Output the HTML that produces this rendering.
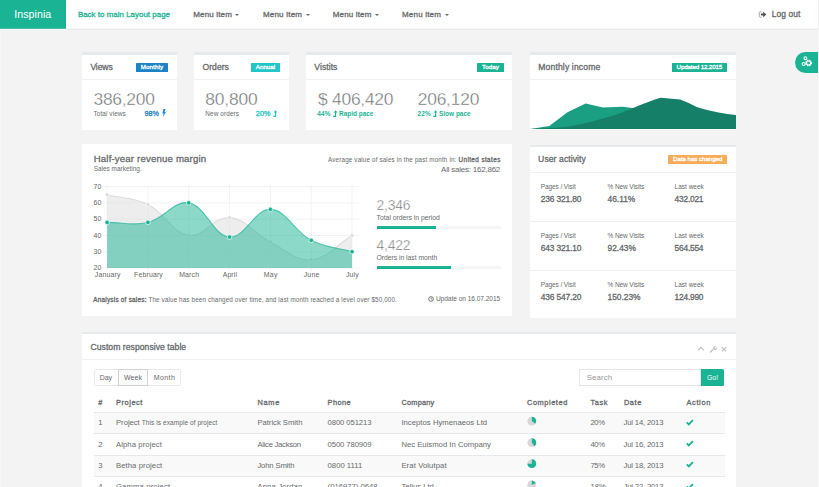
<!DOCTYPE html><html><head><meta charset="utf-8"><style>html,body{margin:0;padding:0}body{width:819px;height:487px;overflow:hidden;background:#f3f3f4;position:relative;font-family:"Liberation Sans",sans-serif}body>div,body>svg{position:absolute}.t{white-space:nowrap}</style></head><body>
<div style="left:0px;top:0px;width:819.00px;height:28.00px;background:#fff;"></div>
<div style="left:0px;top:28px;width:819.00px;height:1.00px;background:#f8f8f9;"></div>
<div style="left:0px;top:29px;width:819.00px;height:1.00px;background:#ebebed;"></div>
<div style="left:0px;top:0px;width:66.00px;height:28.00px;background:#1ab394;"></div>
<div style="left:0px;top:28px;width:66.00px;height:1.00px;background:#4cc0a8;"></div>
<div style="left:0px;top:29px;width:66.00px;height:1.00px;background:#f9f8f9;"></div>
<div style="left:0px;top:30px;width:1.00px;height:457.00px;background:#f7f7f8;"></div>
<div class="t" style="left:14.20px;top:9.00px;font-size:10.6px;line-height:10.6px;color:#fff;font-weight:normal;letter-spacing:0.080px;">Inspinia</div>
<div class="t" style="left:77.90px;top:11.00px;font-size:7.9px;line-height:7.9px;color:#1ab394;font-weight:normal;letter-spacing:0.037px;-webkit-text-stroke:0.3px #1ab394;">Back to main Layout page</div>
<div class="t" style="left:193.30px;top:11.00px;font-size:8.0px;line-height:8.0px;color:#676a6c;font-weight:normal;letter-spacing:0.144px;-webkit-text-stroke:0.3px #676a6c;">Menu item</div>
<div style="left:235.4px;top:14.4px;width:0;height:0;border-left:2.1px solid transparent;border-right:2.1px solid transparent;border-top:2.1px solid #676a6c"></div>
<div class="t" style="left:262.90px;top:11.00px;font-size:8.0px;line-height:8.0px;color:#676a6c;font-weight:normal;letter-spacing:0.219px;-webkit-text-stroke:0.3px #676a6c;">Menu item</div>
<div style="left:305.6px;top:14.4px;width:0;height:0;border-left:2.1px solid transparent;border-right:2.1px solid transparent;border-top:2.1px solid #676a6c"></div>
<div class="t" style="left:332.80px;top:11.00px;font-size:8.0px;line-height:8.0px;color:#676a6c;font-weight:normal;letter-spacing:0.144px;-webkit-text-stroke:0.3px #676a6c;">Menu item</div>
<div style="left:374.9px;top:14.4px;width:0;height:0;border-left:2.1px solid transparent;border-right:2.1px solid transparent;border-top:2.1px solid #676a6c"></div>
<div class="t" style="left:402.00px;top:11.00px;font-size:8.0px;line-height:8.0px;color:#676a6c;font-weight:normal;letter-spacing:0.194px;-webkit-text-stroke:0.3px #676a6c;">Menu item</div>
<div style="left:444.5px;top:14.4px;width:0;height:0;border-left:2.1px solid transparent;border-right:2.1px solid transparent;border-top:2.1px solid #676a6c"></div>
<div class="t" style="left:771.80px;top:10.00px;font-size:8.4px;line-height:8.4px;color:#676a6c;font-weight:normal;letter-spacing:0.079px;-webkit-text-stroke:0.3px #676a6c;">Log out</div>
<svg style="left:757.5px;top:10px" width="10" height="9" viewBox="0 0 10 9"><path d="M3.6 1.8H2.2Q1.3 1.8 1.3 2.7V6.3Q1.3 7.2 2.2 7.2H3.6" fill="none" stroke="#aaa" stroke-width="1"/><path d="M2.9 3.6H5.2V1.7L8.4 4.5L5.2 7.3V5.4H2.9Z" fill="#555"/></svg>
<div style="left:818px;top:0;width:1px;height:487px;background:#f8f8f9"></div>
<div style="left:818px;top:0;width:1px;height:30px;background:#f0f0f1"></div>
<div style="left:794.8px;top:51.5px;width:23.2px;height:21.3px;background:#1ab394;border-radius:10.6px 0 0 10.6px"></div>
<svg style="left:800px;top:55px" width="14" height="13" viewBox="0 0 14 13"><circle cx="8.6" cy="8" r="2.6" fill="none" stroke="#fff" stroke-width="1.6" stroke-dasharray="1.2 0.9"/><circle cx="8.6" cy="8" r="2.0" fill="none" stroke="#fff" stroke-width="1.1"/><circle cx="3.6" cy="9" r="1.5" fill="none" stroke="#fff" stroke-width="1.1"/><circle cx="5.4" cy="3.2" r="1.4" fill="none" stroke="#fff" stroke-width="1.1"/></svg>
<div style="left:82px;top:52.3px;width:95.00px;height:2.30px;background:#e7eaec;"></div>
<div style="left:82px;top:54.599999999999994px;width:95.00px;height:75.40px;background:#fff;"></div>
<div style="left:82px;top:79.3px;width:95.00px;height:1.00px;background:#eef0f1;"></div>
<div style="left:194px;top:52.3px;width:95.00px;height:2.30px;background:#e7eaec;"></div>
<div style="left:194px;top:54.599999999999994px;width:95.00px;height:75.40px;background:#fff;"></div>
<div style="left:194px;top:79.3px;width:95.00px;height:1.00px;background:#eef0f1;"></div>
<div style="left:306px;top:52.3px;width:206.00px;height:2.30px;background:#e7eaec;"></div>
<div style="left:306px;top:54.599999999999994px;width:206.00px;height:75.40px;background:#fff;"></div>
<div style="left:306px;top:79.3px;width:206.00px;height:1.00px;background:#eef0f1;"></div>
<div style="left:529.5px;top:52.3px;width:206.50px;height:2.30px;background:#e7eaec;"></div>
<div style="left:529.5px;top:54.599999999999994px;width:206.50px;height:75.40px;background:#fff;"></div>
<div style="left:529.5px;top:79.3px;width:206.50px;height:1.00px;background:#eef0f1;"></div>
<div class="t" style="left:90.40px;top:63.00px;font-size:8.6px;line-height:8.6px;color:#676a6c;font-weight:normal;letter-spacing:-0.096px;-webkit-text-stroke:0.3px #676a6c;">Views</div>
<div style="left:135.6px;top:63px;width:32.30px;height:9.00px;background:#1c84c6;border-radius:0.6px"></div>
<div class="t" style="left:140.70px;top:64.00px;font-size:6.2px;line-height:6.2px;color:#fff;font-weight:normal;letter-spacing:0.132px;-webkit-text-stroke:0.3px #fff;">Monthly</div>
<div class="t" style="left:93.50px;top:91.00px;font-size:17.4px;line-height:17.4px;color:#676a6c;font-weight:normal;letter-spacing:-0.250px;-webkit-text-stroke:0.4px #fff;">386,200</div>
<div class="t" style="left:93.50px;top:111.00px;font-size:6.4px;line-height:6.4px;color:#676a6c;font-weight:normal;letter-spacing:0.100px;">Total views</div>
<div class="t" style="left:144.50px;top:110.00px;font-size:7.2px;line-height:7.2px;color:#1c84c6;font-weight:normal;letter-spacing:0.045px;-webkit-text-stroke:0.3px #1c84c6;">98%</div>
<svg style="left:161.5px;top:109px" width="4" height="8" viewBox="0 0 4 8"><path d="M1.6 0H3.6L2.4 3H3.8L1 8L1.6 4.2H0.3Z" fill="#1c84c6"/></svg>
<div class="t" style="left:202.50px;top:63.00px;font-size:8.6px;line-height:8.6px;color:#676a6c;font-weight:normal;letter-spacing:0.024px;-webkit-text-stroke:0.3px #676a6c;">Orders</div>
<div style="left:250.7px;top:63px;width:29.20px;height:9.00px;background:#23c6c8;border-radius:0.6px"></div>
<div class="t" style="left:255.80px;top:64.00px;font-size:6.2px;line-height:6.2px;color:#fff;font-weight:normal;letter-spacing:0.019px;-webkit-text-stroke:0.3px #fff;">Annual</div>
<div class="t" style="left:205.30px;top:91.00px;font-size:17.4px;line-height:17.4px;color:#676a6c;font-weight:normal;letter-spacing:-0.184px;-webkit-text-stroke:0.4px #fff;">80,800</div>
<div class="t" style="left:205.30px;top:111.00px;font-size:6.4px;line-height:6.4px;color:#676a6c;font-weight:normal;letter-spacing:0.120px;">New orders</div>
<div class="t" style="left:255.70px;top:110.00px;font-size:7.2px;line-height:7.2px;color:#23c6c8;font-weight:normal;letter-spacing:0.195px;-webkit-text-stroke:0.3px #23c6c8;">20%</div>
<svg style="left:272.5px;top:109.5px" width="5" height="7" viewBox="0 0 5 7"><path d="M0.3 6.3H2.6V1.8" fill="none" stroke="#23c6c8" stroke-width="1.2"/><path d="M0.8 2.4L2.6 0.2L4.4 2.4Z" fill="#23c6c8"/></svg>
<div class="t" style="left:314.30px;top:63.00px;font-size:8.6px;line-height:8.6px;color:#676a6c;font-weight:normal;letter-spacing:0.053px;-webkit-text-stroke:0.3px #676a6c;">Vistits</div>
<div style="left:477px;top:63px;width:26.60px;height:9.00px;background:#1ab394;border-radius:0.6px"></div>
<div class="t" style="left:482.10px;top:64.00px;font-size:6.2px;line-height:6.2px;color:#fff;font-weight:normal;letter-spacing:0.064px;-webkit-text-stroke:0.3px #fff;">Today</div>
<div class="t" style="left:318.00px;top:91.00px;font-size:17.4px;line-height:17.4px;color:#676a6c;font-weight:normal;letter-spacing:-0.239px;-webkit-text-stroke:0.4px #fff;">$ 406,420</div>
<div class="t" style="left:417.70px;top:91.00px;font-size:17.4px;line-height:17.4px;color:#676a6c;font-weight:normal;letter-spacing:-0.200px;-webkit-text-stroke:0.4px #fff;">206,120</div>
<div class="t" style="left:317.30px;top:111.00px;font-size:6.4px;line-height:6.4px;color:#1ab394;font-weight:bold;letter-spacing:0.195px;">44%</div>
<svg style="left:332.5px;top:110px" width="5" height="7" viewBox="0 0 5 7"><path d="M0.3 6.3H2.6V1.8" fill="none" stroke="#1ab394" stroke-width="1.2"/><path d="M0.8 2.4L2.6 0.2L4.4 2.4Z" fill="#1ab394"/></svg>
<div class="t" style="left:339.00px;top:111.00px;font-size:6.4px;line-height:6.4px;color:#1ab394;font-weight:bold;letter-spacing:0.028px;">Rapid pace</div>
<div class="t" style="left:417.40px;top:111.00px;font-size:6.4px;line-height:6.4px;color:#1ab394;font-weight:bold;letter-spacing:0.195px;">22%</div>
<svg style="left:432.6px;top:110px" width="5" height="7" viewBox="0 0 5 7"><path d="M0.3 6.3H2.6V1.8" fill="none" stroke="#1ab394" stroke-width="1.2"/><path d="M0.8 2.4L2.6 0.2L4.4 2.4Z" fill="#1ab394"/></svg>
<div class="t" style="left:439.00px;top:111.00px;font-size:6.4px;line-height:6.4px;color:#1ab394;font-weight:bold;letter-spacing:0.038px;">Slow pace</div>
<div class="t" style="left:538.30px;top:63.00px;font-size:8.6px;line-height:8.6px;color:#676a6c;font-weight:normal;letter-spacing:0.136px;-webkit-text-stroke:0.3px #676a6c;">Monthly income</div>
<div style="left:671.5px;top:63px;width:55.50px;height:9.00px;background:#1ab394;border-radius:0.6px"></div>
<div class="t" style="left:676.60px;top:64.00px;font-size:6.2px;line-height:6.2px;color:#fff;font-weight:normal;letter-spacing:-0.134px;-webkit-text-stroke:0.3px #fff;">Updated 12.2015</div>
<svg style="left:529.5px;top:90px" width="206.5" height="40" viewBox="529.5 90 206.5 40"><path d="M529.6 129L548.8 126L567 112.2L585.1 103.4L602.5 107.5L622 106.8L636 108.5L640 129Z" fill="#1b9f83"/><path d="M529.6 129C545 128.5 556 127.8 567 126.8C578 125 588 122.5 598 119.8C610 116.6 620 113.6 628 110.1C636 106.6 646 102 660.2 97.7L679.7 99.4C688 102.5 692 105 697.8 107.5C706 110 712 111.3 718 112.5C724 113.6 730 114.4 735.9 115.1V129Z" fill="#167f68"/></svg>
<div style="left:82px;top:144.2px;width:430.00px;height:172.20px;background:#fff;"></div>
<div style="left:529.5px;top:144.7px;width:206.50px;height:2.30px;background:#e7eaec;"></div>
<div style="left:529.5px;top:147.0px;width:206.50px;height:170.70px;background:#fff;"></div>
<div style="left:529.5px;top:172.3px;width:206.50px;height:1.00px;background:#eef0f1;"></div>
<div class="t" style="left:93.70px;top:154.00px;font-size:9.6px;line-height:9.6px;color:#676a6c;font-weight:normal;letter-spacing:0.182px;-webkit-text-stroke:0.3px #676a6c;">Half-year revenue margin</div>
<div class="t" style="left:93.70px;top:166.00px;font-size:6.4px;line-height:6.4px;color:#676a6c;font-weight:normal;letter-spacing:0.029px;">Sales marketing.</div>
<svg style="left:0;top:0" width="819" height="487" viewBox="0 0 819 487"><line x1="103.5" y1="268.00" x2="359.4" y2="268.00" stroke="#ebebeb" stroke-width="0.6"/><line x1="103.5" y1="251.72" x2="359.4" y2="251.72" stroke="#ebebeb" stroke-width="0.6"/><line x1="103.5" y1="235.44" x2="359.4" y2="235.44" stroke="#ebebeb" stroke-width="0.6"/><line x1="103.5" y1="219.16" x2="359.4" y2="219.16" stroke="#ebebeb" stroke-width="0.6"/><line x1="103.5" y1="202.88" x2="359.4" y2="202.88" stroke="#ebebeb" stroke-width="0.6"/><line x1="103.5" y1="186.60" x2="359.4" y2="186.60" stroke="#ebebeb" stroke-width="0.6"/><line x1="107.10" y1="185.2" x2="107.10" y2="271" stroke="#ebebeb" stroke-width="0.6"/><line x1="147.92" y1="185.2" x2="147.92" y2="271" stroke="#ebebeb" stroke-width="0.6"/><line x1="188.74" y1="185.2" x2="188.74" y2="271" stroke="#ebebeb" stroke-width="0.6"/><line x1="229.56" y1="185.2" x2="229.56" y2="271" stroke="#ebebeb" stroke-width="0.6"/><line x1="270.38" y1="185.2" x2="270.38" y2="271" stroke="#ebebeb" stroke-width="0.6"/><line x1="311.20" y1="185.2" x2="311.20" y2="271" stroke="#ebebeb" stroke-width="0.6"/><line x1="352.02" y1="185.2" x2="352.02" y2="271" stroke="#ebebeb" stroke-width="0.6"/><path d="M107.10 194.74 C123.43 198.65 133.21 197.18 147.92 204.51 C165.87 213.46 171.28 232.65 188.74 235.44 C203.94 237.86 213.76 216.27 229.56 217.53 C246.42 218.88 253.52 233.21 270.38 241.95 C286.18 250.14 295.40 261.12 311.20 259.86 C328.06 258.52 335.69 245.21 352.02 235.44 L352.02 268 L107.1 268Z" fill="rgba(220,220,220,0.5)"/><path d="M107.10 194.74 C123.43 198.65 133.21 197.18 147.92 204.51 C165.87 213.46 171.28 232.65 188.74 235.44 C203.94 237.86 213.76 216.27 229.56 217.53 C246.42 218.88 253.52 233.21 270.38 241.95 C286.18 250.14 295.40 261.12 311.20 259.86 C328.06 258.52 335.69 245.21 352.02 235.44" fill="none" stroke="rgba(220,220,220,1)" stroke-width="1.1"/><circle cx="107.10" cy="194.74" r="1.9" fill="#dcdcdc" stroke="#fff" stroke-width="0.6"/><circle cx="147.92" cy="204.51" r="1.9" fill="#dcdcdc" stroke="#fff" stroke-width="0.6"/><circle cx="188.74" cy="235.44" r="1.9" fill="#dcdcdc" stroke="#fff" stroke-width="0.6"/><circle cx="229.56" cy="217.53" r="1.9" fill="#dcdcdc" stroke="#fff" stroke-width="0.6"/><circle cx="270.38" cy="241.95" r="1.9" fill="#dcdcdc" stroke="#fff" stroke-width="0.6"/><circle cx="311.20" cy="259.86" r="1.9" fill="#dcdcdc" stroke="#fff" stroke-width="0.6"/><circle cx="352.02" cy="235.44" r="1.9" fill="#dcdcdc" stroke="#fff" stroke-width="0.6"/><path d="M107.10 222.42 C123.43 222.42 132.43 226.12 147.92 222.42 C165.09 218.31 173.74 200.19 188.74 202.88 C206.39 206.05 212.61 235.72 229.56 237.07 C245.26 238.32 254.36 208.75 270.38 209.39 C287.02 210.06 293.33 231.06 311.20 240.32 C325.99 247.99 335.69 247.16 352.02 251.72 L352.02 268 L107.1 268Z" fill="rgba(26,179,148,0.5)"/><path d="M107.10 222.42 C123.43 222.42 132.43 226.12 147.92 222.42 C165.09 218.31 173.74 200.19 188.74 202.88 C206.39 206.05 212.61 235.72 229.56 237.07 C245.26 238.32 254.36 208.75 270.38 209.39 C287.02 210.06 293.33 231.06 311.20 240.32 C325.99 247.99 335.69 247.16 352.02 251.72" fill="none" stroke="rgba(26,179,148,0.7)" stroke-width="1.1"/><circle cx="107.10" cy="222.42" r="2.3" fill="#1ab394" stroke="#fff" stroke-width="0.7"/><circle cx="147.92" cy="222.42" r="2.3" fill="#1ab394" stroke="#fff" stroke-width="0.7"/><circle cx="188.74" cy="202.88" r="2.3" fill="#1ab394" stroke="#fff" stroke-width="0.7"/><circle cx="229.56" cy="237.07" r="2.3" fill="#1ab394" stroke="#fff" stroke-width="0.7"/><circle cx="270.38" cy="209.39" r="2.3" fill="#1ab394" stroke="#fff" stroke-width="0.7"/><circle cx="311.20" cy="240.32" r="2.3" fill="#1ab394" stroke="#fff" stroke-width="0.7"/><circle cx="352.02" cy="251.72" r="2.3" fill="#1ab394" stroke="#fff" stroke-width="0.7"/></svg>
<div class="t" style="left:93.50px;top:265.00px;font-size:6.9px;line-height:6.9px;color:#666;font-weight:normal;letter-spacing:0.224px;">20</div>
<div class="t" style="left:93.50px;top:249.00px;font-size:6.9px;line-height:6.9px;color:#666;font-weight:normal;letter-spacing:0.224px;">30</div>
<div class="t" style="left:93.50px;top:233.00px;font-size:6.9px;line-height:6.9px;color:#666;font-weight:normal;letter-spacing:0.224px;">40</div>
<div class="t" style="left:93.50px;top:216.00px;font-size:6.9px;line-height:6.9px;color:#666;font-weight:normal;letter-spacing:0.224px;">50</div>
<div class="t" style="left:93.50px;top:200.00px;font-size:6.9px;line-height:6.9px;color:#666;font-weight:normal;letter-spacing:0.224px;">60</div>
<div class="t" style="left:93.50px;top:184.00px;font-size:6.9px;line-height:6.9px;color:#666;font-weight:normal;letter-spacing:0.224px;">70</div>
<div class="t" style="left:94.83px;top:272.00px;font-size:6.9px;line-height:6.9px;color:#666;font-weight:normal;letter-spacing:0.164px;">January</div>
<div class="t" style="left:134.11px;top:272.00px;font-size:6.9px;line-height:6.9px;color:#666;font-weight:normal;letter-spacing:0.158px;">February</div>
<div class="t" style="left:179.15px;top:272.00px;font-size:6.9px;line-height:6.9px;color:#666;font-weight:normal;letter-spacing:0.192px;">March</div>
<div class="t" style="left:222.66px;top:272.00px;font-size:6.9px;line-height:6.9px;color:#666;font-weight:normal;letter-spacing:0.138px;">April</div>
<div class="t" style="left:263.86px;top:272.00px;font-size:6.9px;line-height:6.9px;color:#666;font-weight:normal;letter-spacing:0.261px;">May</div>
<div class="t" style="left:303.72px;top:272.00px;font-size:6.9px;line-height:6.9px;color:#666;font-weight:normal;letter-spacing:0.200px;">June</div>
<div class="t" style="left:345.88px;top:272.00px;font-size:6.9px;line-height:6.9px;color:#666;font-weight:normal;letter-spacing:0.164px;">July</div>
<div class="t" style="left:328.10px;top:157.00px;font-size:6.3px;line-height:6.3px;color:#676a6c;font-weight:normal;letter-spacing:0.144px;">Average value of sales in the past month in:</div>
<div class="t" style="left:458.50px;top:157.00px;font-size:6.3px;line-height:6.3px;color:#676a6c;font-weight:normal;letter-spacing:0.419px;-webkit-text-stroke:0.3px #676a6c;">United states</div>
<div class="t" style="left:441.10px;top:166.00px;font-size:8.0px;line-height:8.0px;color:#676a6c;font-weight:normal;letter-spacing:-0.232px;">All sales: 162,862</div>
<div class="t" style="left:376.60px;top:199.00px;font-size:13.9px;line-height:13.9px;color:#676a6c;font-weight:normal;letter-spacing:-0.221px;-webkit-text-stroke:0.4px #fff;">2,346</div>
<div class="t" style="left:376.60px;top:215.00px;font-size:6.8px;line-height:6.8px;color:#676a6c;font-weight:normal;letter-spacing:-0.014px;">Total orders in period</div>
<div style="left:376.6px;top:225.9px;width:124.00px;height:2.90px;background:#f5f5f5;"></div>
<div style="left:376.6px;top:225.9px;width:59.40px;height:2.90px;background:#1ab394;"></div>
<div class="t" style="left:376.60px;top:239.00px;font-size:13.9px;line-height:13.9px;color:#676a6c;font-weight:normal;letter-spacing:-0.221px;-webkit-text-stroke:0.4px #fff;">4,422</div>
<div class="t" style="left:376.60px;top:255.00px;font-size:6.8px;line-height:6.8px;color:#676a6c;font-weight:normal;letter-spacing:-0.033px;">Orders in last month</div>
<div style="left:376.6px;top:266px;width:124.00px;height:2.90px;background:#f5f5f5;"></div>
<div style="left:376.6px;top:266px;width:74.20px;height:2.90px;background:#1ab394;"></div>
<div class="t" style="left:93.30px;top:297.00px;font-size:6.3px;line-height:6.3px;color:#676a6c;font-weight:normal;letter-spacing:0.261px;-webkit-text-stroke:0.3px #676a6c;">Analysis of sales:</div>
<div class="t" style="left:148.50px;top:297.00px;font-size:6.3px;line-height:6.3px;color:#676a6c;font-weight:normal;letter-spacing:0.122px;">The value has been changed over time, and last month reached a level over $50,000.</div>
<svg style="left:428px;top:295.5px" width="6" height="6" viewBox="0 0 6 6"><circle cx="3" cy="3" r="2.35" fill="none" stroke="#676a6c" stroke-width="0.9"/><path d="M3 1.6V3.1H4.2" fill="none" stroke="#676a6c" stroke-width="0.7"/></svg>
<div class="t" style="left:435.90px;top:296.00px;font-size:6.6px;line-height:6.6px;color:#676a6c;font-weight:normal;letter-spacing:-0.049px;">Update on 16.07.2015</div>
<div class="t" style="left:538.10px;top:155.00px;font-size:8.6px;line-height:8.6px;color:#676a6c;font-weight:normal;letter-spacing:0.081px;-webkit-text-stroke:0.3px #676a6c;">User activity</div>
<div style="left:668px;top:155px;width:59.20px;height:9.00px;background:#f8ac59;border-radius:0.6px"></div>
<div class="t" style="left:673.10px;top:156.00px;font-size:6.2px;line-height:6.2px;color:#fff;font-weight:normal;letter-spacing:-0.062px;-webkit-text-stroke:0.3px #fff;">Data has changed</div>
<div class="t" style="left:540.70px;top:184.00px;font-size:6.5px;line-height:6.5px;color:#676a6c;font-weight:normal;letter-spacing:-0.084px;">Pages / Visit</div>
<div class="t" style="left:607.50px;top:184.00px;font-size:6.5px;line-height:6.5px;color:#676a6c;font-weight:normal;letter-spacing:-0.101px;">% New Visits</div>
<div class="t" style="left:674.60px;top:184.00px;font-size:6.5px;line-height:6.5px;color:#676a6c;font-weight:normal;letter-spacing:-0.010px;">Last week</div>
<div class="t" style="left:540.70px;top:195.00px;font-size:8.4px;line-height:8.4px;color:#676a6c;font-weight:normal;letter-spacing:-0.127px;-webkit-text-stroke:0.3px #676a6c;">236 321.80</div>
<div class="t" style="left:607.50px;top:195.00px;font-size:8.4px;line-height:8.4px;color:#676a6c;font-weight:normal;letter-spacing:0.000px;-webkit-text-stroke:0.3px #676a6c;">46.11%</div>
<div class="t" style="left:674.60px;top:195.00px;font-size:8.4px;line-height:8.4px;color:#676a6c;font-weight:normal;letter-spacing:-0.228px;-webkit-text-stroke:0.3px #676a6c;">432.021</div>
<div style="left:529.5px;top:221.10000000000002px;width:206.50px;height:1.00px;background:#eef0f1;"></div>
<div class="t" style="left:540.70px;top:233.00px;font-size:6.5px;line-height:6.5px;color:#676a6c;font-weight:normal;letter-spacing:-0.084px;">Pages / Visit</div>
<div class="t" style="left:607.50px;top:233.00px;font-size:6.5px;line-height:6.5px;color:#676a6c;font-weight:normal;letter-spacing:-0.101px;">% New Visits</div>
<div class="t" style="left:674.60px;top:233.00px;font-size:6.5px;line-height:6.5px;color:#676a6c;font-weight:normal;letter-spacing:-0.010px;">Last week</div>
<div class="t" style="left:540.70px;top:244.00px;font-size:8.4px;line-height:8.4px;color:#676a6c;font-weight:normal;letter-spacing:-0.127px;-webkit-text-stroke:0.3px #676a6c;">643 321.10</div>
<div class="t" style="left:607.50px;top:244.00px;font-size:8.4px;line-height:8.4px;color:#676a6c;font-weight:normal;letter-spacing:0.000px;-webkit-text-stroke:0.3px #676a6c;">92.43%</div>
<div class="t" style="left:674.60px;top:244.00px;font-size:8.4px;line-height:8.4px;color:#676a6c;font-weight:normal;letter-spacing:-0.228px;-webkit-text-stroke:0.3px #676a6c;">564.554</div>
<div style="left:529.5px;top:269.9px;width:206.50px;height:1.00px;background:#eef0f1;"></div>
<div class="t" style="left:540.70px;top:282.00px;font-size:6.5px;line-height:6.5px;color:#676a6c;font-weight:normal;letter-spacing:-0.084px;">Pages / Visit</div>
<div class="t" style="left:607.50px;top:282.00px;font-size:6.5px;line-height:6.5px;color:#676a6c;font-weight:normal;letter-spacing:-0.101px;">% New Visits</div>
<div class="t" style="left:674.60px;top:282.00px;font-size:6.5px;line-height:6.5px;color:#676a6c;font-weight:normal;letter-spacing:-0.010px;">Last week</div>
<div class="t" style="left:540.70px;top:293.00px;font-size:8.4px;line-height:8.4px;color:#676a6c;font-weight:normal;letter-spacing:-0.127px;-webkit-text-stroke:0.3px #676a6c;">436 547.20</div>
<div class="t" style="left:607.50px;top:293.00px;font-size:8.4px;line-height:8.4px;color:#676a6c;font-weight:normal;letter-spacing:0.000px;-webkit-text-stroke:0.3px #676a6c;">150.23%</div>
<div class="t" style="left:674.60px;top:293.00px;font-size:8.4px;line-height:8.4px;color:#676a6c;font-weight:normal;letter-spacing:-0.228px;-webkit-text-stroke:0.3px #676a6c;">124.990</div>
<div style="left:82px;top:331.8px;width:654.00px;height:2.30px;background:#e7eaec;"></div>
<div style="left:82px;top:334.1px;width:654.00px;height:152.90px;background:#fff;"></div>
<div style="left:82px;top:359.3px;width:654.00px;height:1.00px;background:#eef0f1;"></div>
<div class="t" style="left:90.50px;top:343.00px;font-size:8.6px;line-height:8.6px;color:#676a6c;font-weight:normal;letter-spacing:0.048px;-webkit-text-stroke:0.3px #676a6c;">Custom responsive table</div>
<svg style="left:695px;top:344px" width="34" height="10" viewBox="0 0 34 10"><path d="M3 6.3L5.9 3.5L8.8 6.3" fill="none" stroke="#c4c4c4" stroke-width="1.3"/><path d="M15 8.5L18.2 5.2" stroke="#c4c4c4" stroke-width="1.4"/><path d="M17.6 4.6A2 2 0 1 1 20.3 6.2L19.5 5.3L20.9 3.9L21.5 4.5A2 2 0 0 0 17.6 4.6Z" fill="#c4c4c4"/><circle cx="19.8" cy="4.3" r="1.8" fill="#c4c4c4"/><path d="M19.4 2.6L21.4 3.2L20.6 5" fill="#fff"/><path d="M26.8 3.2L31 7.4M31 3.2L26.8 7.4" stroke="#c4c4c4" stroke-width="1.3"/></svg>
<div style="left:93.7px;top:368.5px;width:87.3px;height:17.1px;box-sizing:border-box;border:1px solid #e7eaec;border-radius:1.5px;background:#fff"></div>
<div style="left:118.1px;top:368.5px;width:29.5px;height:17.1px;box-sizing:border-box;border:1px solid #d2d2d2;background:#fbfbfb"></div>
<div class="t" style="left:99.80px;top:374.00px;font-size:7.0px;line-height:7.0px;color:#676a6c;font-weight:normal;letter-spacing:-0.125px;">Day</div>
<div class="t" style="left:123.90px;top:374.00px;font-size:7.0px;line-height:7.0px;color:#676a6c;font-weight:normal;letter-spacing:0.075px;">Week</div>
<div class="t" style="left:153.70px;top:374.00px;font-size:7.0px;line-height:7.0px;color:#676a6c;font-weight:normal;letter-spacing:0.436px;">Month</div>
<div style="left:579.3px;top:368.6px;width:121.7px;height:17.2px;box-sizing:border-box;border:1px solid #e5e6e7;background:#fff"></div>
<div class="t" style="left:586.70px;top:374.00px;font-size:7.9px;line-height:7.9px;color:#9a9a9a;font-weight:normal;letter-spacing:0.074px;">Search</div>
<div style="left:701px;top:368.6px;width:23.4px;height:17.2px;background:#1ab394;border-radius:0 1.5px 1.5px 0"></div>
<div class="t" style="left:706.90px;top:375.00px;font-size:6.8px;line-height:6.8px;color:#fff;font-weight:normal;letter-spacing:0.169px;">Go!</div>
<div style="left:93.5px;top:411.6px;width:631.00px;height:1.20px;background:#e7eaec;"></div>
<div class="t" style="left:98.20px;top:399.00px;font-size:7.4px;line-height:7.4px;color:#676a6c;font-weight:normal;letter-spacing:0.000px;-webkit-text-stroke:0.3px #676a6c;">#</div>
<div class="t" style="left:116.00px;top:399.00px;font-size:7.4px;line-height:7.4px;color:#676a6c;font-weight:normal;letter-spacing:0.561px;-webkit-text-stroke:0.3px #676a6c;">Project</div>
<div class="t" style="left:257.40px;top:399.00px;font-size:7.4px;line-height:7.4px;color:#676a6c;font-weight:normal;letter-spacing:0.720px;-webkit-text-stroke:0.3px #676a6c;">Name</div>
<div class="t" style="left:327.60px;top:399.00px;font-size:7.4px;line-height:7.4px;color:#676a6c;font-weight:normal;letter-spacing:0.401px;-webkit-text-stroke:0.3px #676a6c;">Phone</div>
<div class="t" style="left:401.40px;top:399.00px;font-size:7.4px;line-height:7.4px;color:#676a6c;font-weight:normal;letter-spacing:0.211px;-webkit-text-stroke:0.3px #676a6c;">Company</div>
<div class="t" style="left:527.00px;top:399.00px;font-size:7.4px;line-height:7.4px;color:#676a6c;font-weight:normal;letter-spacing:0.564px;-webkit-text-stroke:0.3px #676a6c;">Completed</div>
<div class="t" style="left:590.60px;top:399.00px;font-size:7.4px;line-height:7.4px;color:#676a6c;font-weight:normal;letter-spacing:0.525px;-webkit-text-stroke:0.3px #676a6c;">Task</div>
<div class="t" style="left:623.90px;top:399.00px;font-size:7.4px;line-height:7.4px;color:#676a6c;font-weight:normal;letter-spacing:0.589px;-webkit-text-stroke:0.3px #676a6c;">Date</div>
<div class="t" style="left:686.50px;top:399.00px;font-size:7.4px;line-height:7.4px;color:#676a6c;font-weight:normal;letter-spacing:0.646px;-webkit-text-stroke:0.3px #676a6c;">Action</div>
<div style="left:93.5px;top:412.8px;width:631.00px;height:20.50px;background:#f9f9f9;"></div>
<div style="left:93.5px;top:433.3px;width:631.00px;height:0.90px;background:#e7eaec;"></div>
<div style="left:93.5px;top:454.6px;width:631.00px;height:21.40px;background:#f9f9f9;"></div>
<div style="left:93.5px;top:454.6px;width:631.00px;height:0.90px;background:#e7eaec;"></div>
<div style="left:93.5px;top:476.0px;width:631.00px;height:0.90px;background:#e7eaec;"></div>
<div class="t" style="left:98.20px;top:419.00px;font-size:7.7px;line-height:7.7px;color:#676a6c;font-weight:normal;letter-spacing:0.000px;">1</div>
<div class="t" style="left:116.00px;top:419.00px;font-size:7.7px;line-height:7.7px;color:#676a6c;font-weight:normal;letter-spacing:-0.028px;">Project</div>
<div class="t" style="left:141.80px;top:420.00px;font-size:6.5px;line-height:6.5px;color:#676a6c;font-weight:normal;letter-spacing:0.076px;">This is example of project</div>
<div class="t" style="left:257.40px;top:419.00px;font-size:7.7px;line-height:7.7px;color:#676a6c;font-weight:normal;letter-spacing:-0.021px;">Patrick Smith</div>
<div class="t" style="left:327.60px;top:419.00px;font-size:7.7px;line-height:7.7px;color:#676a6c;font-weight:normal;letter-spacing:-0.106px;">0800 051213</div>
<div class="t" style="left:401.40px;top:419.00px;font-size:7.7px;line-height:7.7px;color:#676a6c;font-weight:normal;letter-spacing:0.034px;">Inceptos Hymenaeos Ltd</div>
<div class="t" style="left:590.40px;top:419.00px;font-size:7.7px;line-height:7.7px;color:#676a6c;font-weight:normal;letter-spacing:-0.406px;">20%</div>
<div class="t" style="left:623.60px;top:419.00px;font-size:7.7px;line-height:7.7px;color:#676a6c;font-weight:normal;letter-spacing:-0.187px;">Jul 14, 2013</div>
<svg style="left:0;top:0" width="819" height="487" viewBox="0 0 819 487"><circle cx="531.8" cy="421.10" r="4.4" fill="#d7d7d7"/><path d="M531.8 421.10V416.70A4.4 4.4 0 0 1 535.36 423.69Z" fill="#1ab394"/></svg>
<svg style="left:686.3px;top:418.70px" width="8" height="7" viewBox="0 0 8 7"><path d="M0.8 3.4L2.8 5.4L6.9 1.2" fill="none" stroke="#1ab394" stroke-width="1.8"/></svg>
<div class="t" style="left:98.20px;top:441.00px;font-size:7.7px;line-height:7.7px;color:#676a6c;font-weight:normal;letter-spacing:0.000px;">2</div>
<div class="t" style="left:116.00px;top:441.00px;font-size:7.7px;line-height:7.7px;color:#676a6c;font-weight:normal;letter-spacing:0.080px;">Alpha project</div>
<div class="t" style="left:257.40px;top:441.00px;font-size:7.7px;line-height:7.7px;color:#676a6c;font-weight:normal;letter-spacing:-0.273px;">Alice Jackson</div>
<div class="t" style="left:327.60px;top:441.00px;font-size:7.7px;line-height:7.7px;color:#676a6c;font-weight:normal;letter-spacing:-0.106px;">0500 780909</div>
<div class="t" style="left:401.40px;top:441.00px;font-size:7.7px;line-height:7.7px;color:#676a6c;font-weight:normal;letter-spacing:0.007px;">Nec Euismod In Company</div>
<div class="t" style="left:590.40px;top:441.00px;font-size:7.7px;line-height:7.7px;color:#676a6c;font-weight:normal;letter-spacing:-0.406px;">40%</div>
<div class="t" style="left:623.60px;top:441.00px;font-size:7.7px;line-height:7.7px;color:#676a6c;font-weight:normal;letter-spacing:-0.187px;">Jul 16, 2013</div>
<svg style="left:0;top:0" width="819" height="487" viewBox="0 0 819 487"><circle cx="531.8" cy="442.60" r="4.4" fill="#d7d7d7"/><path d="M531.8 442.60V438.20A4.4 4.4 0 0 1 534.39 446.16Z" fill="#1ab394"/></svg>
<svg style="left:686.3px;top:440.20px" width="8" height="7" viewBox="0 0 8 7"><path d="M0.8 3.4L2.8 5.4L6.9 1.2" fill="none" stroke="#1ab394" stroke-width="1.8"/></svg>
<div class="t" style="left:98.20px;top:462.00px;font-size:7.7px;line-height:7.7px;color:#676a6c;font-weight:normal;letter-spacing:0.000px;">3</div>
<div class="t" style="left:116.00px;top:462.00px;font-size:7.7px;line-height:7.7px;color:#676a6c;font-weight:normal;letter-spacing:0.077px;">Betha project</div>
<div class="t" style="left:257.40px;top:462.00px;font-size:7.7px;line-height:7.7px;color:#676a6c;font-weight:normal;letter-spacing:-0.158px;">John Smith</div>
<div class="t" style="left:327.60px;top:462.00px;font-size:7.7px;line-height:7.7px;color:#676a6c;font-weight:normal;letter-spacing:0.002px;">0800 1111</div>
<div class="t" style="left:401.40px;top:462.00px;font-size:7.7px;line-height:7.7px;color:#676a6c;font-weight:normal;letter-spacing:0.101px;">Erat Volutpat</div>
<div class="t" style="left:590.40px;top:462.00px;font-size:7.7px;line-height:7.7px;color:#676a6c;font-weight:normal;letter-spacing:-0.406px;">75%</div>
<div class="t" style="left:623.60px;top:462.00px;font-size:7.7px;line-height:7.7px;color:#676a6c;font-weight:normal;letter-spacing:-0.187px;">Jul 18, 2013</div>
<svg style="left:0;top:0" width="819" height="487" viewBox="0 0 819 487"><circle cx="531.8" cy="463.70" r="4.4" fill="#d7d7d7"/><path d="M531.8 463.70V459.30A4.4 4.4 0 1 1 527.40 463.70Z" fill="#1ab394"/></svg>
<svg style="left:686.3px;top:461.30px" width="8" height="7" viewBox="0 0 8 7"><path d="M0.8 3.4L2.8 5.4L6.9 1.2" fill="none" stroke="#1ab394" stroke-width="1.8"/></svg>
<div class="t" style="left:98.20px;top:483.00px;font-size:7.7px;line-height:7.7px;color:#676a6c;font-weight:normal;letter-spacing:0.000px;">4</div>
<div class="t" style="left:116.00px;top:483.00px;font-size:7.7px;line-height:7.7px;color:#676a6c;font-weight:normal;letter-spacing:0.132px;">Gamma project</div>
<div class="t" style="left:257.40px;top:483.00px;font-size:7.7px;line-height:7.7px;color:#676a6c;font-weight:normal;letter-spacing:0.131px;">Anna Jordan</div>
<div class="t" style="left:327.60px;top:483.00px;font-size:7.7px;line-height:7.7px;color:#676a6c;font-weight:normal;letter-spacing:0.000px;">(016977) 0648</div>
<div class="t" style="left:401.40px;top:483.00px;font-size:7.7px;line-height:7.7px;color:#676a6c;font-weight:normal;letter-spacing:0.000px;">Tellus Ltd</div>
<div class="t" style="left:590.40px;top:483.00px;font-size:7.7px;line-height:7.7px;color:#676a6c;font-weight:normal;letter-spacing:0.000px;">18%</div>
<div class="t" style="left:623.60px;top:483.00px;font-size:7.7px;line-height:7.7px;color:#676a6c;font-weight:normal;letter-spacing:-0.187px;">Jul 22, 2013</div>
<svg style="left:0;top:0" width="819" height="487" viewBox="0 0 819 487"><circle cx="531.8" cy="484.90" r="4.4" fill="#d7d7d7"/><path d="M531.8 484.90V480.50A4.4 4.4 0 0 1 535.78 483.03Z" fill="#1ab394"/></svg>
<svg style="left:686.3px;top:482.50px" width="8" height="7" viewBox="0 0 8 7"><path d="M0.8 3.4L2.8 5.4L6.9 1.2" fill="none" stroke="#1ab394" stroke-width="1.8"/></svg>
</body></html>
